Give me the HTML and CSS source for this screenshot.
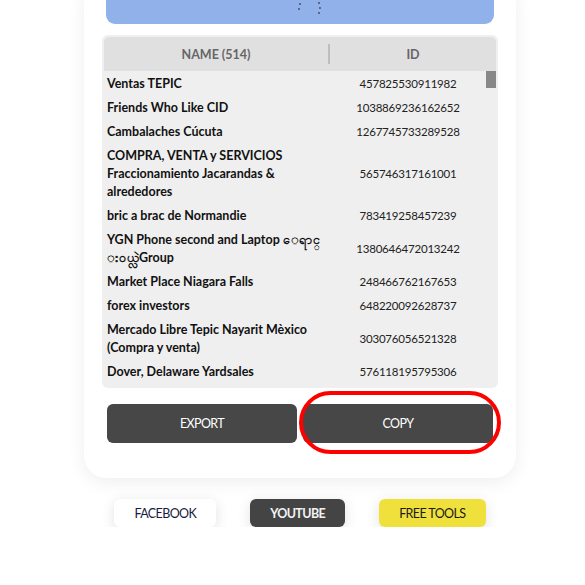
FILE: index.html
```html
<!DOCTYPE html>
<html lang="en">
<head>
  <meta charset="UTF-8">
  <meta name="viewport" content="width=device-width, initial-scale=1.0">
  <title>Group ID Extractor</title>
  <link rel="stylesheet" href="styles.css">
</head>
<body>
  <div class="page">
    <div class="card">
      <div class="status-bar">
        <svg class="loader" width="30" height="16" viewBox="0 0 30 16">
          <circle cx="6" cy="4" r="0.9" fill="#445"/>
          <circle cx="5" cy="9" r="0.9" fill="#445"/>
          <circle cx="25" cy="3" r="0.9" fill="#445"/>
          <circle cx="26" cy="8" r="0.9" fill="#445"/>
          <circle cx="25" cy="13" r="0.9" fill="#445"/>
        </svg>
      </div>

      <div class="table">
        <div class="table-head">
          <div class="head-cell">NAME (514)</div>
          <div class="head-cell">ID</div>
        </div>
        <div class="table-body">
          <div class="rows">
            <div class="row"><div class="name">Ventas TEPIC</div><div class="id">457825530911982</div></div>
            <div class="row"><div class="name">Friends Who Like CID</div><div class="id">1038869236162652</div></div>
            <div class="row"><div class="name">Cambalaches Cúcuta</div><div class="id">1267745733289528</div></div>
            <div class="row"><div class="name">COMPRA, VENTA y SERVICIOS Fraccionamiento Jacarandas &amp; alrededores</div><div class="id">565746317161001</div></div>
            <div class="row"><div class="name">bric a brac de Normandie</div><div class="id">783419258457239</div></div>
            <div class="row"><div class="name">YGN Phone second and Laptop ေရာင္<wbr>းဝယ္လဲGroup</div><div class="id">1380646472013242</div></div>
            <div class="row"><div class="name">Market Place Niagara Falls</div><div class="id">248466762167653</div></div>
            <div class="row"><div class="name">forex investors</div><div class="id">648220092628737</div></div>
            <div class="row"><div class="name">Mercado Libre Tepic Nayarit Mèxico (Compra y venta)</div><div class="id">303076056521328</div></div>
            <div class="row"><div class="name">Dover, Delaware Yardsales</div><div class="id">576118195795306</div></div>
            <div class="row"><div class="name">Compra y Venta Tepic</div><div class="id">214587963254101</div></div>
            <div class="row"><div class="name">Garage Sale Online</div><div class="id">398214756320145</div></div>
          </div>
          <div class="scroll-track"><div class="scroll-thumb"></div></div>
        </div>
      </div>

      <div class="actions">
        <button class="btn-dark">EXPORT</button>
        <div class="highlight-wrap">
          <button class="btn-dark">COPY</button>
          <div class="highlight"></div>
        </div>
      </div>
    </div>

    <div class="links">
      <a class="link link-facebook">FACEBOOK</a>
      <a class="link link-youtube">YOUTUBE</a>
      <a class="link link-tools">FREE TOOLS</a>
    </div>
  </div>
</body>
</html>
```

FILE: styles.css
```css
body {
  margin: 0;
  padding: 0;
  background-color: #fff;
  font-family: Lato, "Open Sans", sans-serif;
  overflow: hidden;
}

.page {
  width: 432px;
  margin-left: 84px;
}

.card {
  margin-top: -20px;
  background: #fff;
  border-radius: 22px;
  padding: 0 18px 35px;
  box-shadow: 0 4px 18px rgba(0,0,0,0.07);
}

.status-bar {
  height: 44px;
  margin: 0 4px;
  background: #91b1ea;
  border-radius: 0 0 9px 9px;
  display: flex;
  justify-content: center;
  align-items: flex-end;
}

.loader {
  display: block;
  margin-bottom: 8px;
  margin-left: 17px;
}

.table {
  margin-top: 11px;
  background: #efefef;
  border-radius: 6px;
  padding: 2px;
}

.table-head {
  display: grid;
  grid-template-columns: 226px 1fr;
  height: 34px;
  background: #e0e0e0;
  border-radius: 5px 5px 0 0;
}

.head-cell {
  display: flex;
  align-items: center;
  justify-content: center;
  font-size: 12.5px;
  font-weight: 700;
  color: #666;
}

.head-cell:first-child {
  border-right: 2px solid #bdbdbd;
  margin: 7px 0;
}

.table-body {
  display: flex;
  height: 315px;
  overflow: hidden;
}

.rows {
  flex: 1;
}

.row {
  display: grid;
  grid-template-columns: 226px 1fr;
  align-items: center;
  padding: 4px 0 2px;
  line-height: 18px;
}

.name {
  padding: 0 0 0 3px;
  font-size: 12.5px;
  font-weight: 700;
  color: #111;
}

.id {
  text-align: center;
  font-size: 11.5px;
  letter-spacing: -0.2px;
  color: #222;
}

.scroll-track {
  width: 10px;
}

.scroll-thumb {
  height: 17px;
  background: #888;
}

.actions {
  display: grid;
  grid-template-columns: 1fr 1fr;
  gap: 6px;
  margin: 16px 5px 0;
}

.btn-dark {
  width: 100%;
  height: 39px;
  border: none;
  border-radius: 6px;
  background: #474747;
  color: #fff;
  font-family: Lato, "Open Sans", sans-serif;
  font-size: 12.5px;
  letter-spacing: -0.6px;
}

.highlight-wrap {
  position: relative;
}

.highlight {
  position: absolute;
  top: -13px;
  bottom: -11px;
  left: -4px;
  right: -8px;
  border: 4px solid #f00;
  border-radius: 32px;
  box-sizing: border-box;
}

.links {
  display: flex;
  justify-content: center;
  gap: 34px;
  margin-top: 21px;
}

.link {
  height: 28px;
  padding: 0 20px;
  border-radius: 6px;
  display: flex;
  align-items: center;
  font-size: 12.5px;
  letter-spacing: -0.6px;
  box-shadow: 0 3px 14px rgba(0,0,0,0.12);
}

.link-facebook {
  background: #fff;
  color: #1a1a3e;
}

.link-youtube {
  background: #444;
  color: #f2f2f2;
  font-weight: 700;
}

.link-tools {
  background: #f0e03c;
  color: #1a1a1a;
}
```
